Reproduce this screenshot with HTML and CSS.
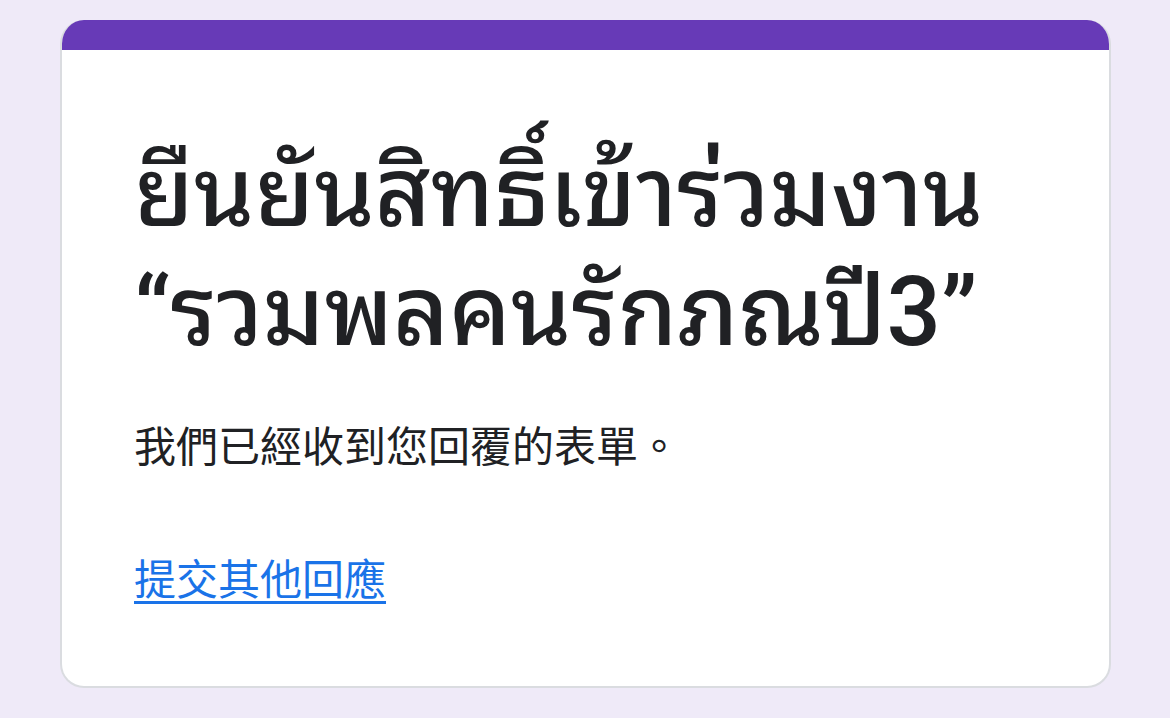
FILE: index.html
```html
<!DOCTYPE html>
<html lang="th">
<head>
<meta charset="utf-8">
<link rel="stylesheet" href="styles.css">
</head>
<body>
<div class="page">
  <div class="card">
    <div class="card-top"></div>
    <div class="card-body">
      <h1 class="title">ยืนยันสิทธิ์เข้าร่วมงาน “รวมพลคนรักภณปี3”</h1>
      <p class="message">我們已經收到您回覆的表單。</p>
      <a class="link" href="#">提交其他回應</a>
    </div>
  </div>
</div>
</body>
</html>
```
FILE: styles.css
```css
html, body {
  margin: 0;
  padding: 0;
  background: #efeaf8;
}
.page {
  padding: 20px 0 0 60px;
}
.card {
  width: 1051px;
  height: 668px;
  box-sizing: border-box;
  background: #ffffff;
  border: 2px solid #dadce0;
  border-top: none;
  border-radius: 24px;
  overflow: hidden;
  display: flex;
  flex-direction: column;
}
.card-top {
  height: 30px;
  background: #673ab7;
  margin: 0 -2px;
}
.card-body {
  padding: 84px 72px 0 72px;
  color: #202124;
}
.title {
  margin: 0;
  font-family: "Roboto", "Noto Sans Thai Looped", sans-serif;
  font-size: 95.8px;
  font-weight: 500;
  line-height: 119px;
  width: 900px;
}
.message {
  margin: 48px 0 0 0;
  font-size: 42px;
  line-height: 56px;
  font-family: "Roboto", "Noto Sans CJK TC", sans-serif;
}
.link {
  display: inline-block;
  margin-top: 77px;
  font-size: 42px;
  line-height: 56px;
  color: #1a73e8;
  text-decoration: underline;
  text-decoration-thickness: 3px;
  text-underline-offset: 6px;
  font-family: "Roboto", "Noto Sans CJK TC", sans-serif;
}
```
